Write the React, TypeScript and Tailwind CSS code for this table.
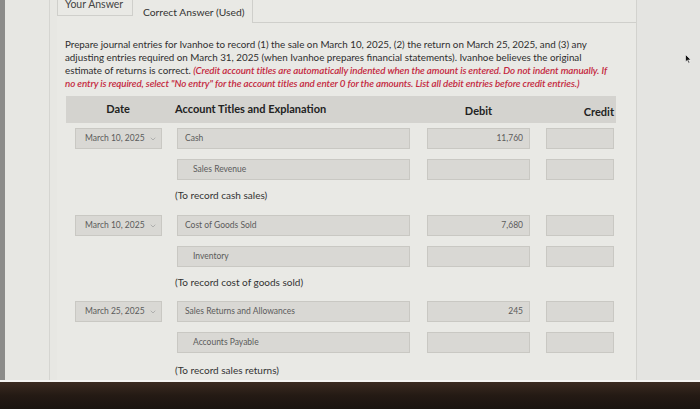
import { ChevronDown } from "lucide-react";

type Row = {
  date?: string;
  account: string;
  indent?: boolean;
  debit?: string;
  mt: string;
};

type Entry = {
  rows: Row[];
  note: string;
  noteMt: string;
};

const entries: Entry[] = [
  {
    rows: [
      { date: "March 10, 2025", account: "Cash", debit: "11,760", mt: "mt-[5px]" },
      { account: "Sales Revenue", indent: true, mt: "mt-[10px]" },
    ],
    note: "(To record cash sales)",
    noteMt: "mt-[8px]",
  },
  {
    rows: [
      { date: "March 10, 2025", account: "Cost of Goods Sold", debit: "7,680", mt: "mt-[13px]" },
      { account: "Inventory", indent: true, mt: "mt-[10px]" },
    ],
    note: "(To record cost of goods sold)",
    noteMt: "mt-[8px]",
  },
  {
    rows: [
      { date: "March 25, 2025", account: "Sales Returns and Allowances", debit: "245", mt: "mt-[12px]" },
      { account: "Accounts Payable", indent: true, mt: "mt-[10px]" },
    ],
    note: "(To record sales returns)",
    noteMt: "mt-[10px]",
  },
];

const box = "h-[21px] bg-[#d9d8d4] border border-[#c9c8c3] text-[8.5px] text-[#5b5b5b] flex items-center";

function JournalRow({ row }: { row: Row }) {
  return (
    <div className={`grid grid-cols-[104px_250px_117px_79px] ${row.mt}`}>
      <div className="pl-[9px]">
        {row.date && (
          <div className={`${box} w-[87px] pl-[9px] pr-[4px] justify-between`}>
            <span>{row.date}</span>
            <ChevronDown className="size-[8px] text-[#9a9a9a]" strokeWidth={2} />
          </div>
        )}
      </div>
      <div className="pl-[7px]">
        <div className={`${box} w-[233px] ${row.indent ? "pl-[15px]" : "pl-[7px]"}`}>{row.account}</div>
      </div>
      <div className="pl-[7px]">
        <div className={`${box} w-[103px] justify-end pr-[6px]`}>{row.debit}</div>
      </div>
      <div className="pl-[9px]">
        <div className={`${box} w-[68px]`} />
      </div>
    </div>
  );
}

export default function App() {
  return (
    <div className="w-[700px] h-[409px] flex flex-col overflow-hidden font-['Lato',sans-serif]">
      <div className="h-[380px] flex bg-[#e7e7e3]">
        <div className="w-[5px] bg-[#8c8c8a]" />
        <div className="w-[45px] border-r border-[#d5d5d1]" />
        <div className="w-[7px]" />

        {/* question panel */}
        <div className="w-[580px] border-r border-[#d2d2ce] bg-[#e9e9e5]">
          <div className="flex h-[23px]">
            <div className="w-[76px] h-[16px] border-x border-b border-[#cfcfcb] pl-[7px] text-[10.5px] leading-[12px] text-[#444] overflow-hidden whitespace-nowrap">
              <div className="-mt-[2px]">Your Answer</div>
            </div>
            <div className="w-[120px] h-[23px] border-r border-[#cfcfcb] pl-[10px] pt-[5px] text-[10.3px] leading-[14px] text-[#333] whitespace-nowrap">
              Correct Answer (Used)
            </div>
            <div className="flex-1 border-b border-[#cfcfcb]" />
          </div>

          <div className="mt-[15px] pl-[8px] text-[9.8px] leading-[13px] text-[#2e2e2e] whitespace-nowrap">
            <div>Prepare journal entries for Ivanhoe to record (1) the sale on March 10, 2025, (2) the return on March 25, 2025, and (3) any</div>
            <div>adjusting entries required on March 31, 2025 (when Ivanhoe prepares financial statements). Ivanhoe believes the original</div>
            <div>
              estimate of returns is correct.{" "}
              <span className="italic font-semibold text-[#c4283e] tracking-[-0.1px]">
                (Credit account titles are automatically indented when the amount is entered. Do not indent manually. If
              </span>
            </div>
            <div className="italic font-semibold text-[#c4283e] tracking-[-0.1px]">
              no entry is required, select "No entry" for the account titles and enter 0 for the amounts. List all debit entries before credit entries.)
            </div>
          </div>

          <div className="ml-[9px] mt-[6px] w-[550px]">
            <div className="h-[27px] bg-[#d4d3cf] grid grid-cols-[104px_250px_117px_79px] items-center text-[11px] font-bold text-[#222]">
              <div className="text-center">Date</div>
              <div className="pl-[5px]">Account Titles and Explanation</div>
              <div className="text-center mt-[4px]">Debit</div>
              <div className="text-right mt-[6px] pr-[2px]">Credit</div>
            </div>

            {entries.map((e, i) => (
              <div key={i}>
                {e.rows.map((r, j) => (
                  <JournalRow key={j} row={r} />
                ))}
                <div className={`${e.noteMt} pl-[109px] text-[10px] leading-[14px] text-[#333]`}>{e.note}</div>
              </div>
            ))}
          </div>
        </div>

        <div className="flex-1 bg-[#e4e4e1] pl-[48px] pt-[54px]">
          <svg width="7" height="10" viewBox="0 0 7 10">
            <path d="M0.5 0.5 L0.5 8 L2.3 6.3 L3.6 9.3 L4.8 8.8 L3.5 5.9 L6 5.9 Z" fill="#111" stroke="#fff" strokeWidth="0.6" />
          </svg>
        </div>
      </div>

      <div className="flex-1 border-t-2 border-[#f4f4f2] bg-gradient-to-b from-[#3b2b21] via-[#241a14] to-[#1a1410]" />
    </div>
  );
}
